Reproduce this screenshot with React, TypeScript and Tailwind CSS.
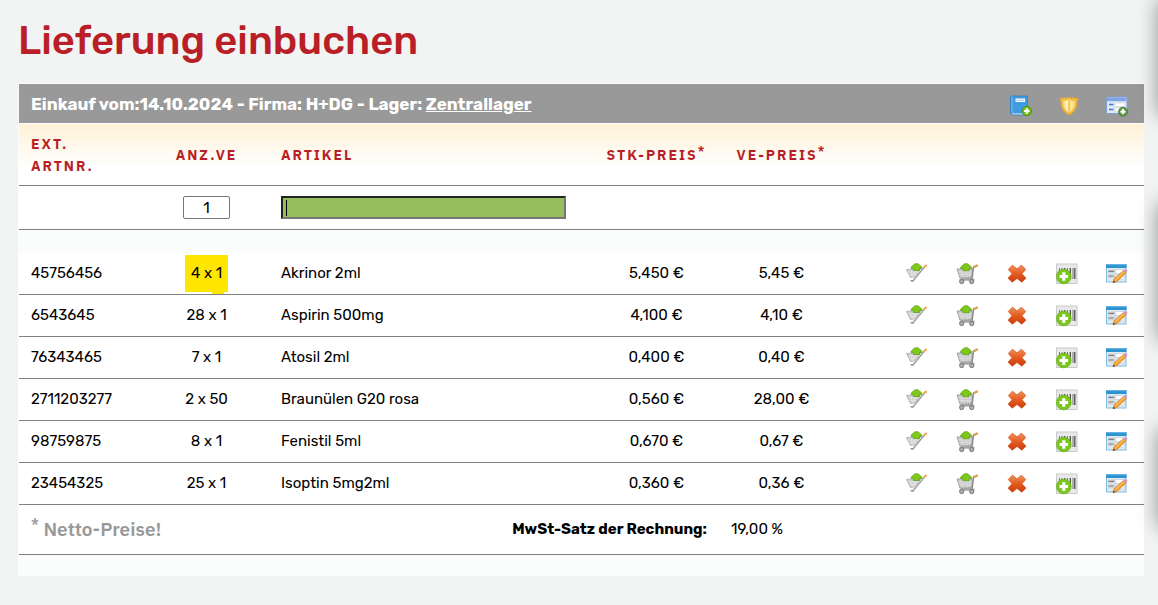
import React from "react";

const items = [
  { nr: "45756456", qty: "4 x 1", name: "Akrinor 2ml", unit: "5,450 €", pack: "5,45 €", marked: true },
  { nr: "6543645", qty: "28 x 1", name: "Aspirin 500mg", unit: "4,100 €", pack: "4,10 €" },
  { nr: "76343465", qty: "7 x 1", name: "Atosil 2ml", unit: "0,400 €", pack: "0,40 €" },
  { nr: "2711203277", qty: "2 x 50", name: "Braunülen G20 rosa", unit: "0,560 €", pack: "28,00 €" },
  { nr: "98759875", qty: "8 x 1", name: "Fenistil 5ml", unit: "0,670 €", pack: "0,67 €" },
  { nr: "23454325", qty: "25 x 1", name: "Isoptin 5mg2ml", unit: "0,360 €", pack: "0,36 €" },
];

function Svg({ children }: { children: React.ReactNode }) {
  return (
    <svg viewBox="0 0 22 22" className="block size-[22px]" aria-hidden="true">
      {children}
    </svg>
  );
}

function Plus({ x, y, r, fill = "#6fb818", edge = "#3f8a10" }: { x: number; y: number; r: number; fill?: string; edge?: string }) {
  const a = r * 0.58;
  return (
    <g>
      <circle cx={x} cy={y} r={r} fill={fill} stroke={edge} strokeWidth="0.8" />
      <path d={`M${x - a} ${y}H${x + a}M${x} ${y - a}V${y + a}`} stroke="#fff" strokeWidth={r * 0.42} />
    </g>
  );
}

function BookIcon() {
  return (
    <Svg>
      <path d="M.5 1h17v19H2l-1.500-1.500z" fill="#3f9be2" stroke="#2f7fc2" strokeWidth="0.8" />
      <path d="M1 1.500h2V18H1z" fill="#5badea" />
      <path d="M2 18.300h14v1.300H2z" fill="#b9d6ee" />
      <path d="M5.500 3.500H15V7H5.500z" fill="#f4f9fd" />
      <path d="M6.500 5.300H14" stroke="#9cc6e6" />
      <Plus x={16.800} y={16} r={4.700} fill="#74bd16" />
    </Svg>
  );
}

function ShieldIcon() {
  return (
    <Svg>
      <path d="M1.500 3q3 1 5-.5Q9 4 11 2q2 2 4.500.5 2 1.500 5 .5L19 6.500Q19.500 16 11 20 2.500 16 3 6.500z" fill="#f0bd45" stroke="#dca033" strokeWidth="0.8" />
      <path d="M11 4q-3 2.500-6 2Q4.500 14 11 17.800 17.500 14 17 6q-3 .5-6-2z" fill="#fbdc76" />
      <path d="M6.500 6.500q2.500-.5 3.700-2v12.500q-3.700-3-3.700-10.500z" fill="#fff3bd" />
      <path d="M12.500 6q1 .7 2 .7v6q-.7 2-2 3z" fill="#fdeaa0" />
      <path d="M11 4.500v13" stroke="#e9b342" strokeWidth="0.9" />
    </Svg>
  );
}

function FormAddIcon() {
  return (
    <Svg>
      <rect x="0.500" y="2" width="20.500" height="16.500" rx="1" fill="#dfe7f4" stroke="#7e9fd8" />
      <path d="M1 2.500h19.500v3.700H1z" fill="#7ea4e4" />
      <path d="M3 9.500h4.500M3 14.500h4.500" stroke="#4d76c8" strokeWidth="1.500" />
      <path d="M9 8h10v3.500H9zM9 13h6v3.500H9z" fill="#fff" stroke="#c5cbd4" strokeWidth="0.5" />
      <Plus x={17} y={16.700} r={4.500} fill="#5f9b49" edge="#41762e" />
    </Svg>
  );
}

function SmallCartIcon() {
  return (
    <Svg>
      <path d="M.5 6.500 15 5.500 8.500 14 4.500 14.500z" fill="#cfcfcf" stroke="#b0b0b0" strokeWidth="0.9" />
      <path d="M2.500 9h10M3.500 11.500h7M5 7.500l1.500 7M8 7v7M11 7l-2 5" stroke="#ececec" strokeWidth="0.6" />
      <path d="M6.500 18.500 18.500 4" stroke="#a2a2a2" strokeWidth="1.500" />
      <path d="m18.300 4 1.700-1.300" stroke="#efa850" strokeWidth="2.200" strokeLinecap="round" />
      <path d="M4.500 17.800h3" stroke="#999" strokeWidth="1.600" />
      <path d="M7.500 7.500V5.500H5.200V4L9 .8h3L15.800 4v1.500h-2.300v2z" fill="#80c919" stroke="#5ba51a" strokeWidth="0.8" strokeLinejoin="round" />
    </Svg>
  );
}

function CartIcon() {
  return (
    <Svg>
      <path d="M1 6h15.500l-.7 8.500L4 15z" fill="#c8c8c8" stroke="#a5a5a5" />
      <path d="M2 9h14M3 11.500h13M5 7l1 7.500M8 7v7.500M11 7v7.500M14 7l-.5 7" stroke="#e8e8e8" strokeWidth="0.600" />
      <path d="m19.500 3.500-2 .5-1.500 12H5" fill="none" stroke="#8e8e8e" strokeWidth="1.600" />
      <path d="m19 3.500 1.800-.9" stroke="#e5a04e" strokeWidth="2.500" strokeLinecap="round" />
      <path d="M3.500 15.800h15v1.900h-15z" fill="#a5a5a5" />
      <circle cx="5.700" cy="18.600" r="2.100" fill="#b0b0b0" stroke="#777" />
      <circle cx="15.700" cy="18.600" r="2.100" fill="#b0b0b0" stroke="#777" />
      <path d="M7 7.700V5.500H4.700V4l3.800-3.200h3L15.300 4v1.500H13v2.200z" fill="#80c919" stroke="#5ba51a" strokeWidth="0.8" strokeLinejoin="round" />
    </Svg>
  );
}

function DeleteIcon() {
  return (
    <Svg>
      <defs>
        <linearGradient id="cross" x1="0" y1="0" x2="0" y2="1">
          <stop stopColor="#f19157" />
          <stop offset="0.500" stopColor="#e55b20" />
          <stop offset="1" stopColor="#c93c0c" />
        </linearGradient>
      </defs>
      <path d="m6.500 2.200 4.500 3.800 4.500-3.800 4.200 4.300L16 10.700l4 4.500-4.200 4-4.800-3.700-4.800 3.700-4.200-4 4-4.500-3.700-4.200z" fill="url(#cross)" stroke="#cf5524" strokeWidth="0.800" strokeLinejoin="round" />
    </Svg>
  );
}

function BarcodeIcon() {
  return (
    <Svg>
      <rect x="0.500" y="1" width="20.500" height="19.500" fill="#e8e8e8" stroke="#cacaca" />
      <path d="M3.500 5v11M6 5v11M11.500 5v11M17 5v11" stroke="#777" strokeWidth="1" />
      <path d="M8.700 5v11M14.300 5v11M18.800 5v11" stroke="#444" strokeWidth="1.200" />
      <Plus x={7.800} y={13.500} r={7.300} fill="#7cc71f" edge="#6ab417" />
    </Svg>
  );
}

function EditIcon() {
  return (
    <Svg>
      <rect x="0.500" y="1.500" width="19.500" height="17.500" fill="#dceaf5" stroke="#82b9de" />
      <path d="M0 1h20.500v4H0z" fill="#2d93d0" />
      <path d="M0 1h20.500v1.200H0z" fill="#62b3e2" />
      <path d="M2 6.500h7v4H2zM2 11.500h7v4H2z" fill="#d2d6da" />
      <path d="M2.500 8.300h5.500M2.500 13h5" stroke="#808080" strokeWidth="1.200" />
      <path d="M9.500 6.500H18v4H9.500zM9.500 12H18v4H9.500z" fill="#fff" stroke="#bcc6ce" strokeWidth="0.600" />
      <path d="m7 19.800 1-3.800 9.500-8.500 2.500 2.500-9.300 8.700z" fill="#f5a12e" stroke="#cf7f22" strokeWidth="0.700" />
      <path d="m9.300 17 9-8.500" stroke="#ffd27a" strokeWidth="0.900" />
      <path d="m17.300 7.500 1.500-1.300q2.200-.5 2.600 1.800L20 9.900z" fill="#d394c6" />
      <path d="m7 19.800.6-2.100 1.500 1.500z" fill="#333" />
    </Svg>
  );
}

function IconButton({ label, children }: { label: string; children: React.ReactNode }) {
  return (
    <button type="button" aria-label={label} className="mx-auto block cursor-pointer">
      {children}
    </button>
  );
}

const actions = [
  { label: "Teilmenge einbuchen", Icon: SmallCartIcon },
  { label: "Einbuchen", Icon: CartIcon },
  { label: "Löschen", Icon: DeleteIcon },
  { label: "Barcode hinzufügen", Icon: BarcodeIcon },
  { label: "Bearbeiten", Icon: EditIcon },
];

export default function App() {
  return (
    <div className="relative min-h-screen overflow-hidden bg-[#f2f4f4] pr-[14px] pl-[18px] font-['Rubik','Inter',sans-serif] text-[15px] text-black">
      <h1 className="pt-[17px] pb-[18px] text-[40px] leading-[48px] font-medium text-[#b91f26]">Lieferung einbuchen</h1>

      <main className="bg-[#fbfdfc] pt-px pb-[21px] pl-px">
        <header className="flex h-[39px] items-center justify-between bg-[#999] pr-4 pl-3 text-white">
          <h2 className="pt-[2px] text-[17px] font-bold">
            Einkauf vom:14.10.2024 - Firma: H+DG - Lager:{" "}
            <a href="#lager" className="underline">Zentrallager</a>
          </h2>
          <div className="flex gap-[26px] pt-1">
            <IconButton label="Artikelkatalog"><BookIcon /></IconButton>
            <IconButton label="Prüfen"><ShieldIcon /></IconButton>
            <IconButton label="Neuer Artikel"><FormAddIcon /></IconButton>
          </div>
        </header>

        <table className="mt-px w-full table-fixed border-separate border-spacing-0 bg-white [&_td]:border-[#808080] [&_th]:border-[#808080]">
          <colgroup>
            <col className="w-[150px]" />
            <col className="w-[75px]" />
            <col />
            <col className="w-[125px]" />
            <col className="w-[125px]" />
            <col className="w-[48px]" />
            <col className="w-[50px]" />
            <col className="w-[50px]" />
            <col className="w-[50px]" />
            <col className="w-[50px]" />
            <col className="w-[50px]" />
            <col className="w-[2px]" />
          </colgroup>
          <thead className="bg-linear-to-b from-[#fff1d6] to-white to-70%">
            <tr className="h-[62px] font-['IBM_Plex_Sans','Roboto',sans-serif] text-[14px] leading-[22px] tracking-[2px] text-[#b91f26] [&>*]:border-b">
              <th scope="col" className="pl-3 text-left">EXT.<br />ARTNR.</th>
              <th scope="col">ANZ.VE</th>
              <th scope="col" className="pl-[37px] text-left">ARTIKEL</th>
              <th scope="col">STK-PREIS<sup className="text-[11px] leading-none">*</sup></th>
              <th scope="col">VE-PREIS<sup className="text-[11px] leading-none">*</sup></th>
              <td colSpan={7}></td>
            </tr>
          </thead>
          <tbody>
            <tr className="h-[44px] [&>td]:border-b">
              <td></td>
              <td>
                <input aria-label="Anzahl VE" defaultValue="1" className="mx-auto block h-[23px] w-[47px] rounded-[2px] border border-[#767676] bg-white text-center outline-none" />
              </td>
              <td className="pl-[37px]">
                <div className="relative w-[285px]">
                  <input aria-label="Artikel" className="block h-[23px] w-full border-2 border-t-[#222] border-r-[#767676] border-b-[#767676] border-l-[#222] bg-[#95be5c] px-[3px] caret-transparent outline-none" />
                  <span className="pointer-events-none absolute top-1 left-[5px] h-4 w-px bg-black" />
                </div>
              </td>
              <td colSpan={9}></td>
            </tr>
            <tr className="h-[23px] bg-[#fbfdfc]">
              <td colSpan={12}></td>
            </tr>
            {items.map((item) => (
              <tr key={item.nr} className="h-[42px] [&>td]:border-b">
                <td className="pl-3">{item.nr}</td>
                <td className="text-center">
                  {item.marked ? (
                    <mark className="relative mx-auto block h-[37px] w-[43px] bg-[#ffe600] leading-[37px] text-black after:absolute after:top-full after:right-1 after:h-[2px] after:w-3 after:bg-[#ffe600]">{item.qty}</mark>
                  ) : (
                    item.qty
                  )}
                </td>
                <td className="pl-[37px]">{item.name}</td>
                <td className="text-center">{item.unit}</td>
                <td className="text-center">{item.pack}</td>
                <td></td>
                {actions.map(({ label, Icon }) => (
                  <td key={label}><IconButton label={`${label}: ${item.name}`}><Icon /></IconButton></td>
                ))}
                <td></td>
              </tr>
            ))}
          </tbody>
          <tfoot>
            <tr className="h-[50px] [&>td]:border-b">
              <td colSpan={2} className="pl-3 font-['IBM_Plex_Sans','Roboto',sans-serif] text-[19px] font-semibold text-[#999]"><sup>*</sup> Netto-Preise!</td>
              <td colSpan={2} className="pr-3 text-right font-bold">MwSt-Satz der Rechnung:</td>
              <td colSpan={8} className="pl-3">19,00 %</td>
            </tr>
          </tfoot>
        </table>
      </main>

      <aside aria-hidden="true" className="absolute top-0 left-full flex w-10 flex-col">
        <div className="h-[115px] shadow-[0_0_20px_rgba(0,0,0,0.4)]" />
        <div className="mt-[88px] h-[137px] shadow-[0_0_20px_rgba(0,0,0,0.4)]" />
        <div className="mt-[90px] h-[97px] shadow-[0_0_20px_rgba(0,0,0,0.4)]" />
      </aside>
    </div>
  );
}
